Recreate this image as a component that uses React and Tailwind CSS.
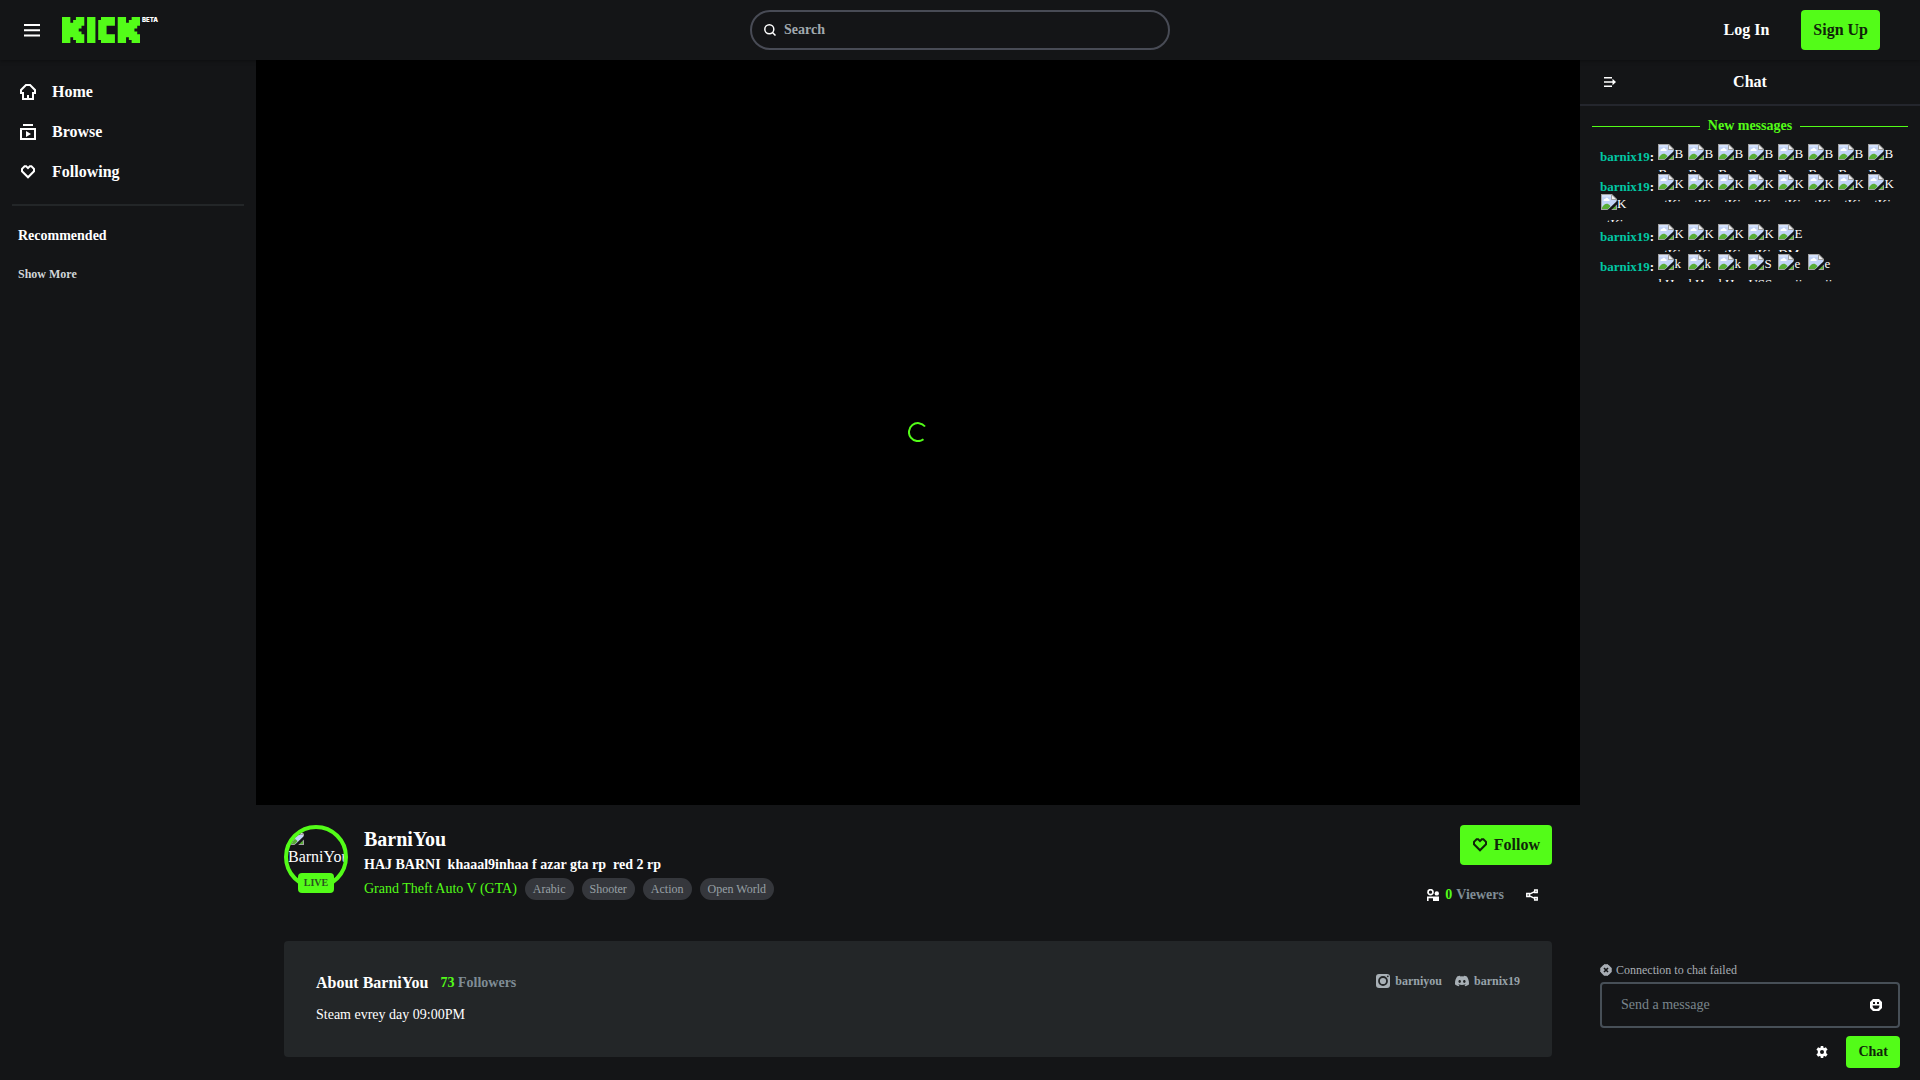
import React from 'react';

const MESSAGES = [
  ['BBoomer', 'BBoomer', 'BBoomer', 'BBoomer', 'BBoomer', 'BBoomer', 'BBoomer', 'BBoomer'],
  ['KatKiss', 'KatKiss', 'KatKiss', 'KatKiss', 'KatKiss', 'KatKiss', 'KatKiss', 'KatKiss', 'KatKiss'],
  ['KatKiss', 'KatKiss', 'KatKiss', 'KatKiss', 'EDMusiC'],
  ['kkHuh', 'kkHuh', 'kkHuh', 'SUSSY', 'emojiAngel', 'emojiAngel'],
];

const TAGS = ['Arabic', 'Shooter', 'Action', 'Open World'];

function MissingImage() {
  return (
    <svg className="float-left h-4 w-4" viewBox="0 0 16 16" aria-hidden="true">
      <path d="M0 0h11l5 5v11H0z" fill="#a3a3a3" />
      <path d="M1 1h9v5h5v9H1z" fill="#c3d4f7" />
      <path d="M1 1h9v2H1z" fill="#d3e0fb" />
      <path d="M11 1.500L14.500 5H11z" fill="#f4f4f4" />
      <path d="M2.500 6.500c0-1.200 1-1.800 1.800-1.500C4.700 3.500 6.800 3.400 7.300 5c1.200-.1 1.700 1.200 1.200 2H2.700z" fill="#fff" />
      <path d="M1 15v-1.500c1.500-2.700 4-4.500 6-3.500 1.200.6 2 1.500 2.500 2.300L7 15z" fill="#58ad36" />
      <path d="M10 15l2.500-2.700c1-.4 1.700-.4 2.500-.1V15z" fill="#58ad36" />
      <path d="M16 7L6.500 16h3.700L16 10.500z" fill="#141517" />
    </svg>
  );
}

function Logo() {
  return (
    <a href="#" aria-label="Kick beta" className="flex items-start gap-0.5">
      <svg className="h-[26px] w-[78px]" viewBox="0 0 28 9" preserveAspectRatio="none" fill="#53fc18" aria-hidden="true">
        <path d="M0 0h3v2h1V1h1V0h3v3H7v1H6v1h1v1h1v3H5V8H4V7H3v2H0z" />
        <path d="M9 0h3v9H9z" />
        <path d="M14 0h5v3h-3v3h3v3h-5V8h-1V1h1z" />
        <path d="M20 0h3v2h1V1h1V0h3v3h-1v1h-1v1h1v1h1v3h-3V8h-1V7h-1v2h-3z" />
      </svg>
      <span className="font-[Inter,sans-serif] text-[6px] leading-[6px] font-black text-white">BETA</span>
    </a>
  );
}

function MenuIcon() {
  return (
    <svg className="h-[14px] w-4" viewBox="0 0 16 14" fill="#fff" aria-hidden="true">
      <path d="M0 1h16v2H0zM0 6.200h16v2H0zM0 11.400h16v2H0z" />
    </svg>
  );
}

function HomeIcon() {
  return (
    <svg className="h-4 w-4" viewBox="0 0 16 16" fill="#fff" fillRule="evenodd" aria-hidden="true">
      <path d="M5.500 0h5l5.500 5.500V10h-2v6H2v-6H0V5.500zM6.400 2L2 6.400V8h2v6h3v-3h2v3h3V8h2V6.400L9.600 2z" />
    </svg>
  );
}

function BrowseIcon() {
  return (
    <svg className="h-4 w-4" viewBox="0 0 16 16" fill="#fff" fillRule="evenodd" aria-hidden="true">
      <path d="M3 0h10v2H3zM0 4h16v12H0zM2 6v8h12V6zM6 7l5 3-5 3z" />
    </svg>
  );
}

function HeartIcon() {
  return (
    <svg className="h-4 w-4" viewBox="0 0 16 16" fill="none" stroke="currentColor" strokeWidth="2" aria-hidden="true">
      <path d="M4.600 2.300h1.600L8 4.100l1.800-1.800h1.600L14 4.900v2.400l-6 6-6-6V4.900z" />
    </svg>
  );
}

function SearchIcon() {
  return (
    <svg className="h-3 w-3 shrink-0" viewBox="0 0 12 12" fill="none" stroke="#fff" strokeWidth="1.500" aria-hidden="true">
      <circle cx="5.300" cy="5.300" r="4.500" />
      <path d="M8.500 8.500l3 3" />
    </svg>
  );
}

function CollapseIcon() {
  return (
    <svg className="h-3 w-3" viewBox="0 0 12 12" fill="#fff" aria-hidden="true">
      <path d="M0 1h8v1.500H0zM0 5.200h8.500V2.800L12 6 8.500 9.200V6.700H0zM0 9.500h8V11H0z" />
    </svg>
  );
}

function FailedIcon() {
  return (
    <svg className="h-3 w-3" viewBox="0 0 12 12" aria-hidden="true">
      <path d="M4 .8h4L11.200 4v4L8 11.200H4L.8 8V4z" fill="#a8adb4" stroke="#a8adb4" strokeLinejoin="round" />
      <path d="M4 4l4 4M8 4L4 8" stroke="#141517" strokeWidth="1.600" />
    </svg>
  );
}

function SmileyIcon() {
  return (
    <svg className="h-3 w-3" viewBox="0 0 12 12" fill="#fff" fillRule="evenodd" aria-hidden="true">
      <path d="M3 0h6l3 3v6l-3 3H3L0 9V3zM3 3v2h2V3zM7 3v2h2V3zM2.500 6.500C2.500 9 4 10 6 10s3.500-1 3.500-3.500z" />
    </svg>
  );
}

function GearIcon() {
  return (
    <svg className="h-3 w-3" viewBox="0 0 12 12" fill="#fff" fillRule="evenodd" aria-hidden="true">
      <path d="M4.700 0h2.600v1.500l1.200.6 1.400-.8 1.700 2.400-1.400 1v2.600l1.400 1-1.700 2.400-1.400-.8-1.200.6V12H4.700v-1.500l-1.200-.6-1.400.8L.4 8.300l1.400-1V4.700l-1.400-1 1.700-2.400 1.400.8 1.200-.6zM6 4a2 2 0 100 4 2 2 0 000-4z" />
    </svg>
  );
}

function ViewersIcon() {
  return (
    <svg className="h-3 w-3" viewBox="0 0 12 12" fill="#fff" aria-hidden="true">
      <circle cx="3.500" cy="3.200" r="2.500" fill="none" stroke="#fff" strokeWidth="1.700" />
      <circle cx="9.800" cy="4.400" r="2.200" />
      <path d="M0 7.500h12V12H6V9.300H1.600V12H0z" />
    </svg>
  );
}

function ShareIcon() {
  return (
    <svg className="h-3 w-3" viewBox="0 0 12 12" fill="none" stroke="#fff" strokeWidth="1.500" aria-hidden="true">
      <path d="M.8 4.600h2.600v2.800H.8zM8.700.9h2.500v2.500H8.700zM8.700 8.600h2.500v2.500H8.700zM3.500 5.200l5.200-2.600M3.500 6.800l5.200 2.600" />
    </svg>
  );
}

function InstagramIcon() {
  return (
    <svg className="h-[14px] w-[14px]" viewBox="0 0 14 14" aria-hidden="true">
      <rect width="14" height="14" rx="3" fill="#a8b0b6" />
      <circle cx="7" cy="7" r="4" fill="none" stroke="#232628" strokeWidth="1.800" />
      <circle cx="11.800" cy="2.300" r=".9" fill="#232628" />
    </svg>
  );
}

function DiscordIcon() {
  return (
    <svg className="h-[14px] w-[14px]" viewBox="0 0 24 24" fill="#a8b0b6" aria-hidden="true">
      <path d="M20.317 4.370a19.791 19.791 0 00-4.885-1.515.074.074 0 00-.079.037c-.21.375-.444.864-.608 1.250a18.270 18.270 0 00-5.487 0 12.640 12.640 0 00-.617-1.250.077.077 0 00-.079-.037A19.736 19.736 0 003.677 4.370a.07.07 0 00-.032.027C.533 9.046-.32 13.580.099 18.057a.082.082 0 00.031.057 19.900 19.900 0 005.993 3.030.078.078 0 00.084-.028c.462-.63.874-1.295 1.226-1.994a.076.076 0 00-.041-.106 13.107 13.107 0 01-1.872-.892.077.077 0 01-.008-.128c.126-.094.252-.192.372-.292a.074.074 0 01.077-.01c3.928 1.793 8.180 1.793 12.062 0a.074.074 0 01.078.01c.12.098.246.198.373.292a.077.077 0 01-.006.127 12.299 12.299 0 01-1.873.892.077.077 0 00-.041.107c.36.698.772 1.362 1.225 1.993a.076.076 0 00.084.028 19.839 19.839 0 006.002-3.030.077.077 0 00.032-.054c.5-5.177-.838-9.674-3.549-13.660a.061.061 0 00-.031-.03zM8.020 15.330c-1.183 0-2.157-1.085-2.157-2.419 0-1.333.956-2.419 2.157-2.419 1.210 0 2.176 1.096 2.157 2.420 0 1.333-.956 2.418-2.157 2.418zm7.975 0c-1.183 0-2.157-1.085-2.157-2.419 0-1.333.955-2.419 2.157-2.419 1.210 0 2.176 1.096 2.157 2.420 0 1.333-.946 2.418-2.157 2.418z" />
    </svg>
  );
}

function NavItem({ icon, label }) {
  return (
    <a href="#" className="flex h-10 items-center gap-4 px-5 text-base font-bold">
      {icon}
      {label}
    </a>
  );
}

function Header() {
  return (
    <header className="relative z-10 grid h-[60px] shrink-0 grid-cols-[1fr_420px_1fr] items-center shadow-[0_1px_4px_rgba(0,0,0,0.35)]">
      <div className="flex items-center gap-[22px] pl-6">
        <button type="button" aria-label="Menu">
          <MenuIcon />
        </button>
        <Logo />
      </div>
      <label className="flex h-10 items-center gap-2 rounded-full border-2 border-[#484b55] px-3">
        <SearchIcon />
        <input
          type="text"
          aria-label="Search"
          placeholder="Search"
          className="w-full bg-transparent text-sm font-bold outline-none placeholder:text-[#a1a9ae]"
        />
      </label>
      <div className="flex items-center justify-end gap-5 pr-10">
        <button type="button" className="h-10 px-3 text-base font-bold">Log In</button>
        <button type="button" className="h-10 rounded bg-[#53fc18] px-3 text-base font-bold text-[#0f2409]">Sign Up</button>
      </div>
    </header>
  );
}

function Sidebar() {
  return (
    <aside className="w-64 shrink-0 pt-3">
      <nav>
        <NavItem icon={<HomeIcon />} label="Home" />
        <NavItem icon={<BrowseIcon />} label="Browse" />
        <NavItem icon={<HeartIcon />} label="Following" />
      </nav>
      <hr className="mx-3 mt-3 border-0 border-t-2 border-[#232628]" />
      <h2 className="mt-5 px-[18px] text-sm leading-5 font-bold">Recommended</h2>
      <button type="button" className="mt-5 px-[18px] text-xs leading-4 font-bold text-[#d1d5d9]">Show More</button>
    </aside>
  );
}

function ChannelInfo() {
  return (
    <div className="flex items-start gap-4">
      <div className="relative h-16 w-16 shrink-0">
        <div className="h-16 w-16 overflow-hidden rounded-full border-4 border-[#53fc18] text-base leading-6 whitespace-nowrap">
          <MissingImage />
          <span className="clear-left block">BarniYou</span>
        </div>
        <span className="absolute -bottom-1 left-3.5 flex h-5 w-9 items-center justify-center rounded-sm bg-[#53fc18] text-[10px] leading-5 font-bold text-[#2a5220]">
          LIVE
        </span>
      </div>
      <div className="min-w-0 flex-1">
        <h1 className="text-xl leading-7 font-bold">BarniYou</h1>
        <p className="text-sm leading-6 font-bold whitespace-pre-wrap">{'HAJ BARNI  khaaal9inhaa f azar gta rp  red 2 rp'}</p>
        <div className="mt-px flex items-center gap-2">
          <a href="#" className="text-sm leading-5 text-[#53fc18]">Grand Theft Auto V (GTA)</a>
          {TAGS.map((tag) => (
            <a key={tag} href="#" className="rounded-full bg-[#35373c] px-2 text-xs leading-[22px] text-[#98a0a5]">{tag}</a>
          ))}
        </div>
      </div>
      <div className="flex flex-col items-end">
        <button type="button" className="flex h-10 items-center gap-1.5 rounded bg-[#53fc18] px-3 text-base font-bold text-[#0f2409]">
          <HeartIcon />
          Follow
        </button>
        <div className="mt-5 flex items-center text-sm leading-5 font-bold text-[#7f8c95]">
          <ViewersIcon />
          <span className="ml-1.5 text-[#53fc18]">0</span>
          <span className="ml-1">Viewers</span>
          <button type="button" aria-label="Share" className="mr-3.5 ml-[22px]">
            <ShareIcon />
          </button>
        </div>
      </div>
    </div>
  );
}

function About() {
  return (
    <section className="mt-9 rounded bg-[#232628] p-8">
      <div className="flex items-start justify-between">
        <div className="flex items-center gap-3">
          <h2 className="text-base leading-5 font-bold">About BarniYou</h2>
          <p className="text-sm leading-5 font-bold text-[#7f8c95]">
            <span className="text-[#53fc18]">73</span> Followers
          </p>
        </div>
        <div className="flex gap-[13px] text-xs leading-4 font-bold text-[#98a3aa]">
          <a href="#" className="flex items-center gap-[5px]">
            <InstagramIcon />
            barniyou
          </a>
          <a href="#" className="flex items-center gap-[5px]">
            <DiscordIcon />
            barnix19
          </a>
        </div>
      </div>
      <p className="mt-3 text-sm leading-5">Steam evrey day 09:00PM</p>
    </section>
  );
}

function Message({ emotes }) {
  return (
    <li className="py-[5px] text-[13px] leading-5">
      <span className="font-bold text-[#00c7a4]">barnix19</span>
      <span className="font-bold">:</span>{' '}
      {emotes.map((name, i) => (
        <span key={i} className="mx-px -my-1.5 inline-block h-7 w-7 overflow-hidden align-middle break-all">
          <MissingImage />
          {name}
        </span>
      ))}
    </li>
  );
}

function Chat() {
  return (
    <aside className="flex w-[340px] shrink-0 flex-col">
      <div className="grid h-[46px] grid-cols-[1fr_auto_1fr] items-center border-b-2 border-[#24262d] px-6">
        <button type="button" aria-label="Collapse chat" className="justify-self-start">
          <CollapseIcon />
        </button>
        <h2 className="text-base font-bold">Chat</h2>
      </div>
      <div className="mt-2.5 flex items-center gap-2 px-3 text-sm leading-5 font-bold text-[#53fc18]">
        <span className="h-px flex-1 bg-[#53fc18]" />
        New messages
        <span className="h-px flex-1 bg-[#53fc18]" />
      </div>
      <ul className="mt-1.5 flex-1 px-5">
        {MESSAGES.map((emotes, i) => (
          <Message key={i} emotes={emotes} />
        ))}
      </ul>
      <form className="px-5 pb-3">
        <p className="flex items-center gap-1 text-xs leading-4 text-[#a8adb4]">
          <FailedIcon />
          Connection to chat failed
        </p>
        <div className="mt-1 flex h-[46px] items-center rounded border-2 border-[#474f57] pr-4 pl-[19px]">
          <input
            type="text"
            aria-label="Send a message"
            placeholder="Send a message"
            className="min-w-0 flex-1 bg-transparent text-sm outline-none placeholder:text-[#7a858c]"
          />
          <button type="button" aria-label="Emotes">
            <SmileyIcon />
          </button>
        </div>
        <div className="mt-2 flex items-center justify-end gap-[18px]">
          <button type="button" aria-label="Chat settings">
            <GearIcon />
          </button>
          <button type="button" className="h-8 rounded bg-[#53fc18] px-3 text-sm font-bold text-[#0f2409]">Chat</button>
        </div>
      </form>
    </aside>
  );
}

export default function App() {
  return (
    <div className="flex h-screen flex-col overflow-hidden bg-[#141517] font-['Liberation_Serif',serif] text-white">
      <Header />
      <div className="flex min-h-0 flex-1">
        <Sidebar />
        <main className="min-w-0 flex-1 overflow-y-auto">
          <div className="flex aspect-video items-center justify-center bg-black">
            <svg className="h-5 w-5" viewBox="0 0 20 20" fill="none" stroke="#53fc18" strokeWidth="2" aria-label="Loading">
              <path d="M17 4.500A9 9 0 1 0 15.500 17.200" />
            </svg>
          </div>
          <div className="px-7 pt-5 pb-4">
            <ChannelInfo />
            <About />
          </div>
        </main>
        <Chat />
      </div>
    </div>
  );
}
